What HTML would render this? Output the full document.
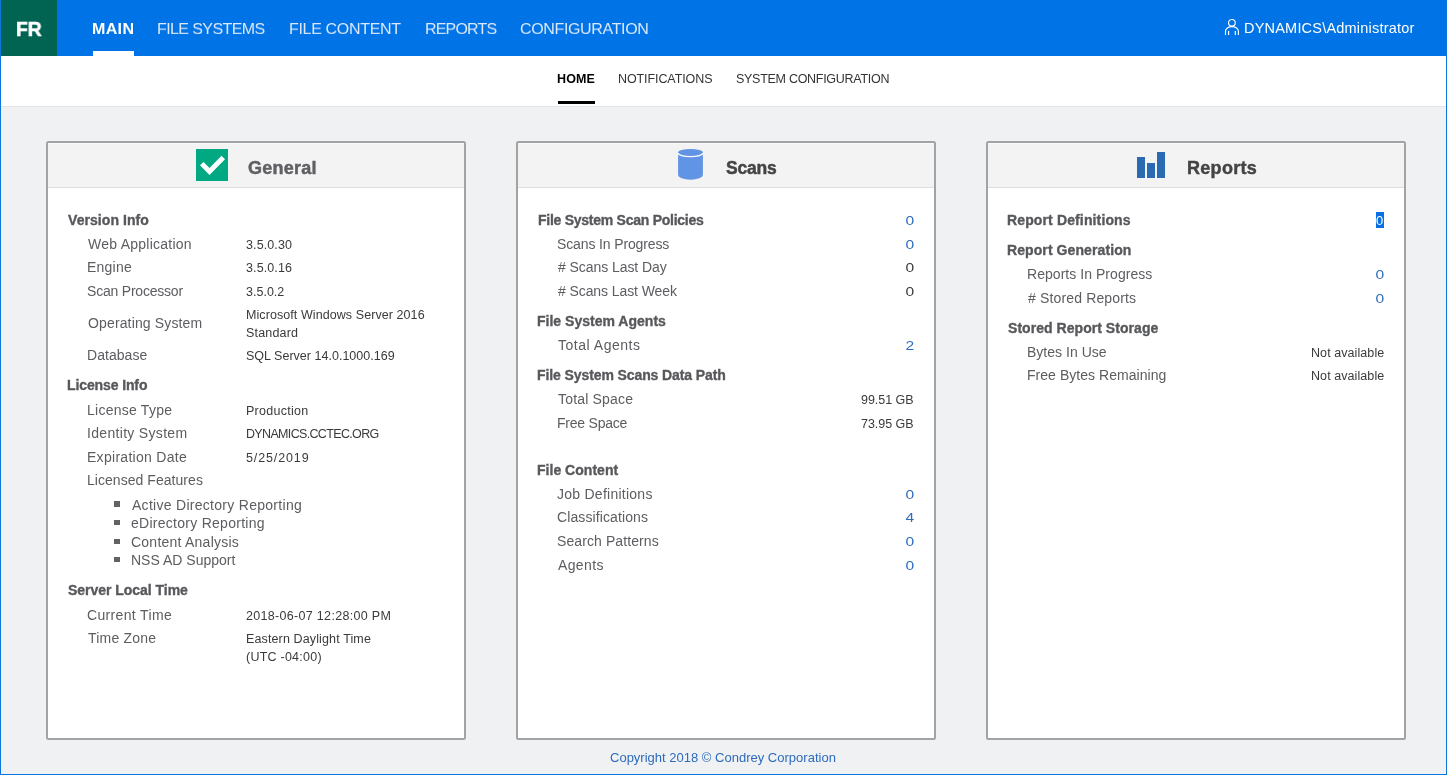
<!DOCTYPE html>
<html><head><meta charset="utf-8"><title>File Reporter</title>
<style>
html,body{margin:0;padding:0;}
body{width:1447px;height:775px;position:relative;overflow:hidden;background:#f0f1f3;font-family:"Liberation Sans", sans-serif;}
.t{position:absolute;white-space:nowrap;will-change:transform;}
.bm{display:inline-block;width:0;height:0;vertical-align:baseline;}
.bar{position:absolute;left:0;top:0;width:1447px;height:56px;background:#0073e7;}
.logo{position:absolute;left:1px;top:0;width:56px;height:56px;background:#016352;}
.ul{position:absolute;left:93px;top:51px;width:41px;height:5px;background:#fff;}
.sub{position:absolute;left:1px;top:56px;width:1445px;height:50px;background:#fff;border-bottom:1px solid #e3e4e6;}
.sul{position:absolute;left:558px;top:101px;width:37px;height:3px;background:#000;}
.card{position:absolute;top:141px;width:416px;height:595px;border:2px solid #a3a3a3;border-radius:2.5px;background:#fff;}
.ch{position:absolute;left:0;top:0;width:416px;height:44px;background:#f3f3f3;border-bottom:1px solid #dedede;box-shadow:inset 0 1px 0 #fafafa;}
.sq{position:absolute;left:114.2px;width:5.8px;height:5.5px;background:#616266;}
.hl{position:absolute;left:1376px;top:212px;width:8px;height:16px;background:#0a6fe0;}
.hlt{position:absolute;left:1376.2px;top:212.5px;font-size:13px;line-height:16px;color:#fff;}
.bl{position:absolute;left:0;top:0;width:1px;height:775px;background:#0b77dc;}
.br{position:absolute;left:1446px;top:0;width:1px;height:775px;background:#0b77dc;}
.bb{position:absolute;left:0;top:774px;width:1447px;height:1px;background:#0b77dc;}
</style></head><body>
<div class="bar"></div><div class="logo"></div><div class="ul"></div>
<div class="sub"></div><div class="sul"></div>
<div class="card" style="left:46px"><div class="ch"></div></div><div class="card" style="left:516px"><div class="ch"></div></div><div class="card" style="left:986px"><div class="ch"></div></div>
<svg style="position:absolute;left:196px;top:149px" width="32" height="32" viewBox="0 0 32 32"><rect width="32" height="32" fill="#01a982"/><path d="M4 16.3 L7.5 12.9 L13.5 19 L25.5 6.8 L29 10.3 L13.5 26.1 Z" fill="#fff"/></svg>
<svg style="position:absolute;left:677px;top:148px" width="27" height="33" viewBox="0 0 27 33"><path d="M1.1 4.3 A12.4 3.4 0 0 1 25.9 4.3 L25.9 26.8 A12.4 5 0 0 1 1.1 26.8 Z" fill="#6194e4"/><path d="M1.1 5.1 A12.4 3.5 0 0 0 25.9 5.1" fill="none" stroke="#fff" stroke-width="1.3"/></svg>
<svg style="position:absolute;left:1137px;top:152px" width="28" height="26" viewBox="0 0 28 26"><rect x="0" y="5" width="8" height="21" fill="#2a6ab2"/><rect x="10" y="11" width="8" height="15" fill="#2a6ab2"/><rect x="20" y="0" width="8" height="26" fill="#2a6ab2"/></svg>
<svg style="position:absolute;left:1224px;top:18px" width="16" height="18" viewBox="0 0 16 18"><circle cx="7.9" cy="4.8" r="3.35" fill="none" stroke="#fff" stroke-width="1.15"/><path d="M1.5 17 V13.2 A6.45 4.6 0 0 1 14.4 13.2 V17" fill="none" stroke="#fff" stroke-width="1.15"/><path d="M4.6 13.1 V17 M11.3 13.1 V17" stroke="#fff" stroke-width="1.15"/></svg>
<div class="sq" style="top:501.4px"></div><div class="sq" style="top:519.8px"></div><div class="sq" style="top:538.6px"></div><div class="sq" style="top:556.6px"></div>
<div class="hl"></div><div class="t hlt">0</div>
<div class="t" id="e0" style="left:15.80px;top:15.60px;font-size:20.5px;line-height:26px;font-weight:700;color:#fff;-webkit-text-stroke:0.6px #fff;transform:scaleX(0.94);transform-origin:0 0;">FR<i class="bm"></i></div><div class="t" id="e1" style="left:92.03px;top:18.96px;font-size:16px;line-height:20px;font-weight:700;color:#fff;letter-spacing:0.366px;transform:scaleY(0.917);transform-origin:0 15.5px;">MAIN<i class="bm"></i></div><div class="t" id="e2" style="left:157.06px;top:18.96px;font-size:16px;line-height:20px;font-weight:400;color:#dce9fb;letter-spacing:-0.591px;transform:scaleY(0.917);transform-origin:0 15.5px;">FILE SYSTEMS<i class="bm"></i></div><div class="t" id="e3" style="left:288.55px;top:18.96px;font-size:16px;line-height:20px;font-weight:400;color:#dce9fb;letter-spacing:-0.323px;transform:scaleY(0.917);transform-origin:0 15.5px;">FILE CONTENT<i class="bm"></i></div><div class="t" id="e4" style="left:424.57px;top:18.96px;font-size:16px;line-height:20px;font-weight:400;color:#dce9fb;letter-spacing:-0.817px;transform:scaleY(0.917);transform-origin:0 15.5px;">REPORTS<i class="bm"></i></div><div class="t" id="e5" style="left:520.10px;top:18.96px;font-size:16px;line-height:20px;font-weight:400;color:#dce9fb;letter-spacing:-0.351px;transform:scaleY(0.917);transform-origin:0 15.5px;">CONFIGURATION<i class="bm"></i></div><div class="t" id="e6" style="left:1243.99px;top:19.00px;font-size:14.5px;line-height:18px;font-weight:400;color:#fff;letter-spacing:0.205px;">DYNAMICS\Administrator<i class="bm"></i></div><div class="t" id="e7" style="left:557.23px;top:71.10px;font-size:12.5px;line-height:16px;font-weight:700;color:#000;letter-spacing:0.141px;">HOME<i class="bm"></i></div><div class="t" id="e8" style="left:618.16px;top:71.10px;font-size:12.5px;line-height:16px;font-weight:400;color:#333;letter-spacing:-0.089px;">NOTIFICATIONS<i class="bm"></i></div><div class="t" id="e9" style="left:735.63px;top:71.10px;font-size:12.5px;line-height:16px;font-weight:400;color:#333;letter-spacing:-0.284px;">SYSTEM CONFIGURATION<i class="bm"></i></div><div class="t" id="e10" style="left:247.71px;top:156.71px;font-size:18px;line-height:22px;font-weight:700;color:#5f6064;letter-spacing:0.252px;-webkit-text-stroke:0.45px #5f6064;">General<i class="bm"></i></div><div class="t" id="e11" style="left:726.15px;top:156.71px;font-size:17.5px;line-height:22px;font-weight:700;color:#444;letter-spacing:-0.208px;-webkit-text-stroke:0.45px #444;">Scans<i class="bm"></i></div><div class="t" id="e12" style="left:1186.58px;top:156.71px;font-size:18px;line-height:22px;font-weight:700;color:#444;letter-spacing:0.299px;-webkit-text-stroke:0.45px #444;">Reports<i class="bm"></i></div><div class="t" id="e13" style="left:68.35px;top:211.01px;font-size:14px;line-height:18px;font-weight:700;color:#57585b;letter-spacing:0.064px;-webkit-text-stroke:0.35px #57585b;">Version Info<i class="bm"></i></div><div class="t" id="e14" style="left:88.20px;top:235.01px;font-size:14px;line-height:18px;font-weight:400;color:#5c5d60;letter-spacing:0.249px;">Web Application<i class="bm"></i></div><div class="t" id="e15" style="left:245.98px;top:236.60px;font-size:12.5px;line-height:16px;font-weight:400;color:#3a3a3a;letter-spacing:0.114px;">3.5.0.30<i class="bm"></i></div><div class="t" id="e16" style="left:87.36px;top:258.01px;font-size:14px;line-height:18px;font-weight:400;color:#5c5d60;letter-spacing:0.231px;">Engine<i class="bm"></i></div><div class="t" id="e17" style="left:245.98px;top:260.01px;font-size:12.5px;line-height:16px;font-weight:400;color:#3a3a3a;letter-spacing:0.104px;">3.5.0.16<i class="bm"></i></div><div class="t" id="e18" style="left:87.18px;top:282.01px;font-size:14px;line-height:18px;font-weight:400;color:#5c5d60;letter-spacing:-0.210px;">Scan Processor<i class="bm"></i></div><div class="t" id="e19" style="left:245.91px;top:284.01px;font-size:12.5px;line-height:16px;font-weight:400;color:#3a3a3a;letter-spacing:0.013px;">3.5.0.2<i class="bm"></i></div><div class="t" id="e20" style="left:87.54px;top:314.01px;font-size:14px;line-height:18px;font-weight:400;color:#5c5d60;letter-spacing:0.139px;">Operating System<i class="bm"></i></div><div class="t" id="e21" style="left:245.85px;top:306.51px;font-size:12.5px;line-height:16px;font-weight:400;color:#3a3a3a;letter-spacing:0.076px;">Microsoft Windows Server 2016<i class="bm"></i></div><div class="t" id="e22" style="left:245.99px;top:324.60px;font-size:12.5px;line-height:16px;font-weight:400;color:#3a3a3a;letter-spacing:0.174px;">Standard<i class="bm"></i></div><div class="t" id="e23" style="left:87.05px;top:346.01px;font-size:14px;line-height:18px;font-weight:400;color:#5c5d60;letter-spacing:0.046px;">Database<i class="bm"></i></div><div class="t" id="e24" style="left:246.01px;top:348.01px;font-size:12.5px;line-height:16px;font-weight:400;color:#3a3a3a;letter-spacing:0.017px;">SQL Server 14.0.1000.169<i class="bm"></i></div><div class="t" id="e25" style="left:67.27px;top:376.01px;font-size:14px;line-height:18px;font-weight:700;color:#57585b;letter-spacing:-0.112px;-webkit-text-stroke:0.35px #57585b;">License Info<i class="bm"></i></div><div class="t" id="e26" style="left:87.14px;top:401.41px;font-size:14px;line-height:18px;font-weight:400;color:#5c5d60;letter-spacing:0.247px;">License Type<i class="bm"></i></div><div class="t" id="e27" style="left:246.25px;top:403.01px;font-size:12.5px;line-height:16px;font-weight:400;color:#3a3a3a;letter-spacing:0.260px;">Production<i class="bm"></i></div><div class="t" id="e28" style="left:86.92px;top:424.41px;font-size:14px;line-height:18px;font-weight:400;color:#5c5d60;letter-spacing:0.314px;">Identity System<i class="bm"></i></div><div class="t" id="e29" style="left:245.71px;top:426.41px;font-size:12.5px;line-height:16px;font-weight:400;color:#3a3a3a;letter-spacing:-0.661px;">DYNAMICS.CCTEC.ORG<i class="bm"></i></div><div class="t" id="e30" style="left:87.14px;top:448.41px;font-size:14px;line-height:18px;font-weight:400;color:#5c5d60;letter-spacing:0.287px;">Expiration Date<i class="bm"></i></div><div class="t" id="e31" style="left:246.12px;top:450.21px;font-size:12.5px;line-height:16px;font-weight:400;color:#3a3a3a;letter-spacing:0.881px;">5/25/2019<i class="bm"></i></div><div class="t" id="e32" style="left:87.32px;top:471.01px;font-size:14px;line-height:18px;font-weight:400;color:#5c5d60;letter-spacing:0.045px;">Licensed Features<i class="bm"></i></div><div class="t" id="e33" style="left:132.06px;top:496.21px;font-size:14px;line-height:18px;font-weight:400;color:#5c5d60;letter-spacing:0.285px;">Active Directory Reporting<i class="bm"></i></div><div class="t" id="e34" style="left:131.05px;top:514.10px;font-size:14px;line-height:18px;font-weight:400;color:#5c5d60;letter-spacing:0.272px;">eDirectory Reporting<i class="bm"></i></div><div class="t" id="e35" style="left:131.19px;top:533.21px;font-size:14px;line-height:18px;font-weight:400;color:#5c5d60;letter-spacing:0.234px;">Content Analysis<i class="bm"></i></div><div class="t" id="e36" style="left:131.26px;top:551.01px;font-size:14px;line-height:18px;font-weight:400;color:#5c5d60;letter-spacing:0.010px;">NSS AD Support<i class="bm"></i></div><div class="t" id="e37" style="left:67.95px;top:581.01px;font-size:14px;line-height:18px;font-weight:700;color:#57585b;letter-spacing:-0.031px;-webkit-text-stroke:0.35px #57585b;">Server Local Time<i class="bm"></i></div><div class="t" id="e38" style="left:87.31px;top:605.60px;font-size:14px;line-height:18px;font-weight:400;color:#5c5d60;letter-spacing:0.346px;">Current Time<i class="bm"></i></div><div class="t" id="e39" style="left:246.01px;top:607.60px;font-size:12.5px;line-height:16px;font-weight:400;color:#3a3a3a;letter-spacing:0.313px;">2018-06-07 12:28:00 PM<i class="bm"></i></div><div class="t" id="e40" style="left:87.82px;top:628.71px;font-size:14px;line-height:18px;font-weight:400;color:#5c5d60;letter-spacing:0.214px;">Time Zone<i class="bm"></i></div><div class="t" id="e41" style="left:245.81px;top:631.10px;font-size:12.5px;line-height:16px;font-weight:400;color:#3a3a3a;letter-spacing:0.128px;">Eastern Daylight Time<i class="bm"></i></div><div class="t" id="e42" style="left:246.22px;top:648.81px;font-size:12.5px;line-height:16px;font-weight:400;color:#3a3a3a;letter-spacing:0.240px;">(UTC -04:00)<i class="bm"></i></div><div class="t" id="e43" style="left:537.59px;top:211.01px;font-size:14px;line-height:18px;font-weight:700;color:#57585b;letter-spacing:-0.258px;-webkit-text-stroke:0.35px #57585b;">File System Scan Policies<i class="bm"></i></div><div class="t" id="e44" style="left:906.88px;top:213.00px;font-size:13px;line-height:16px;font-weight:400;color:#2d6bbd;transform:scaleX(1.2);transform-origin:100% 0;">0<i class="bm"></i></div><div class="t" id="e45" style="left:557.01px;top:235.01px;font-size:14px;line-height:18px;font-weight:400;color:#5c5d60;letter-spacing:-0.128px;">Scans In Progress<i class="bm"></i></div><div class="t" id="e46" style="left:906.88px;top:237.00px;font-size:13px;line-height:16px;font-weight:400;color:#2d6bbd;transform:scaleX(1.2);transform-origin:100% 0;">0<i class="bm"></i></div><div class="t" id="e47" style="left:557.90px;top:258.01px;font-size:14px;line-height:18px;font-weight:400;color:#5c5d60;letter-spacing:-0.063px;"># Scans Last Day<i class="bm"></i></div><div class="t" id="e48" style="left:906.89px;top:260.00px;font-size:13px;line-height:16px;font-weight:400;color:#3a3a3a;transform:scaleX(1.2);transform-origin:100% 0;">0<i class="bm"></i></div><div class="t" id="e49" style="left:558.11px;top:281.60px;font-size:14px;line-height:18px;font-weight:400;color:#5c5d60;letter-spacing:-0.091px;"># Scans Last Week<i class="bm"></i></div><div class="t" id="e50" style="left:906.68px;top:283.60px;font-size:13px;line-height:16px;font-weight:400;color:#3a3a3a;transform:scaleX(1.2);transform-origin:100% 0;">0<i class="bm"></i></div><div class="t" id="e51" style="left:537.14px;top:311.81px;font-size:14px;line-height:18px;font-weight:700;color:#57585b;letter-spacing:0.012px;-webkit-text-stroke:0.35px #57585b;">File System Agents<i class="bm"></i></div><div class="t" id="e52" style="left:558.12px;top:335.91px;font-size:14px;line-height:18px;font-weight:400;color:#5c5d60;letter-spacing:0.516px;">Total Agents<i class="bm"></i></div><div class="t" id="e53" style="left:906.98px;top:337.91px;font-size:13px;line-height:16px;font-weight:400;color:#2d6bbd;transform:scaleX(1.2);transform-origin:100% 0;">2<i class="bm"></i></div><div class="t" id="e54" style="left:537.07px;top:366.21px;font-size:14px;line-height:18px;font-weight:700;color:#57585b;letter-spacing:-0.098px;-webkit-text-stroke:0.35px #57585b;">File System Scans Data Path<i class="bm"></i></div><div class="t" id="e55" style="left:558.04px;top:390.01px;font-size:14px;line-height:18px;font-weight:400;color:#5c5d60;letter-spacing:0.179px;">Total Space<i class="bm"></i></div><div class="t" id="e56" style="left:861.21px;top:392.01px;font-size:12.5px;line-height:16px;font-weight:400;color:#3a3a3a;letter-spacing:-0.050px;">99.51 GB<i class="bm"></i></div><div class="t" id="e57" style="left:556.96px;top:413.71px;font-size:14px;line-height:18px;font-weight:400;color:#5c5d60;letter-spacing:-0.231px;">Free Space<i class="bm"></i></div><div class="t" id="e58" style="left:861.38px;top:415.71px;font-size:12.5px;line-height:16px;font-weight:400;color:#3a3a3a;letter-spacing:-0.043px;">73.95 GB<i class="bm"></i></div><div class="t" id="e59" style="left:537.14px;top:460.60px;font-size:14px;line-height:18px;font-weight:700;color:#57585b;letter-spacing:0.021px;-webkit-text-stroke:0.35px #57585b;">File Content<i class="bm"></i></div><div class="t" id="e60" style="left:556.97px;top:485.01px;font-size:14px;line-height:18px;font-weight:400;color:#5c5d60;letter-spacing:0.254px;">Job Definitions<i class="bm"></i></div><div class="t" id="e61" style="left:906.88px;top:487.00px;font-size:13px;line-height:16px;font-weight:400;color:#2d6bbd;transform:scaleX(1.2);transform-origin:100% 0;">0<i class="bm"></i></div><div class="t" id="e62" style="left:556.78px;top:508.21px;font-size:14px;line-height:18px;font-weight:400;color:#5c5d60;letter-spacing:0.106px;">Classifications<i class="bm"></i></div><div class="t" id="e63" style="left:906.51px;top:510.21px;font-size:13px;line-height:16px;font-weight:400;color:#2d6bbd;transform:scaleX(1.2);transform-origin:100% 0;">4<i class="bm"></i></div><div class="t" id="e64" style="left:556.74px;top:531.71px;font-size:14px;line-height:18px;font-weight:400;color:#5c5d60;letter-spacing:0.090px;">Search Patterns<i class="bm"></i></div><div class="t" id="e65" style="left:906.66px;top:533.71px;font-size:13px;line-height:16px;font-weight:400;color:#2d6bbd;transform:scaleX(1.2);transform-origin:100% 0;">0<i class="bm"></i></div><div class="t" id="e66" style="left:557.82px;top:555.81px;font-size:14px;line-height:18px;font-weight:400;color:#5c5d60;letter-spacing:0.374px;">Agents<i class="bm"></i></div><div class="t" id="e67" style="left:906.88px;top:557.80px;font-size:13px;line-height:16px;font-weight:400;color:#2d6bbd;transform:scaleX(1.2);transform-origin:100% 0;">0<i class="bm"></i></div><div class="t" id="e68" style="left:1007.37px;top:210.90px;font-size:14px;line-height:18px;font-weight:700;color:#57585b;letter-spacing:0.131px;-webkit-text-stroke:0.35px #57585b;">Report Definitions<i class="bm"></i></div><div class="t" id="e69" style="left:1007.07px;top:240.71px;font-size:14px;line-height:18px;font-weight:700;color:#57585b;letter-spacing:0.089px;-webkit-text-stroke:0.35px #57585b;">Report Generation<i class="bm"></i></div><div class="t" id="e70" style="left:1027.05px;top:265.31px;font-size:14px;line-height:18px;font-weight:400;color:#5c5d60;letter-spacing:0.045px;">Reports In Progress<i class="bm"></i></div><div class="t" id="e71" style="left:1376.88px;top:267.30px;font-size:13px;line-height:16px;font-weight:400;color:#2d6bbd;transform:scaleX(1.2);transform-origin:100% 0;">0<i class="bm"></i></div><div class="t" id="e72" style="left:1028.48px;top:288.91px;font-size:14px;line-height:18px;font-weight:400;color:#5c5d60;letter-spacing:0.150px;"># Stored Reports<i class="bm"></i></div><div class="t" id="e73" style="left:1376.88px;top:290.91px;font-size:13px;line-height:16px;font-weight:400;color:#2d6bbd;transform:scaleX(1.2);transform-origin:100% 0;">0<i class="bm"></i></div><div class="t" id="e74" style="left:1007.80px;top:318.60px;font-size:14px;line-height:18px;font-weight:700;color:#57585b;letter-spacing:0.046px;-webkit-text-stroke:0.35px #57585b;">Stored Report Storage<i class="bm"></i></div><div class="t" id="e75" style="left:1027.21px;top:342.71px;font-size:14px;line-height:18px;font-weight:400;color:#5c5d60;letter-spacing:0.018px;">Bytes In Use<i class="bm"></i></div><div class="t" id="e76" style="left:1311.45px;top:344.71px;font-size:12.5px;line-height:16px;font-weight:400;color:#3a3a3a;letter-spacing:0.077px;">Not available<i class="bm"></i></div><div class="t" id="e77" style="left:1026.96px;top:366.21px;font-size:14px;line-height:18px;font-weight:400;color:#5c5d60;letter-spacing:0.040px;">Free Bytes Remaining<i class="bm"></i></div><div class="t" id="e78" style="left:1311.45px;top:368.21px;font-size:12.5px;line-height:16px;font-weight:400;color:#3a3a3a;letter-spacing:0.077px;">Not available<i class="bm"></i></div><div class="t" id="e79" style="left:609.97px;top:750.00px;font-size:13px;line-height:16px;font-weight:400;color:#2d6bbd;letter-spacing:0.006px;">Copyright 2018 &copy; Condrey Corporation<i class="bm"></i></div>
<div class="bl"></div><div class="br"></div><div class="bb"></div>
</body></html>
